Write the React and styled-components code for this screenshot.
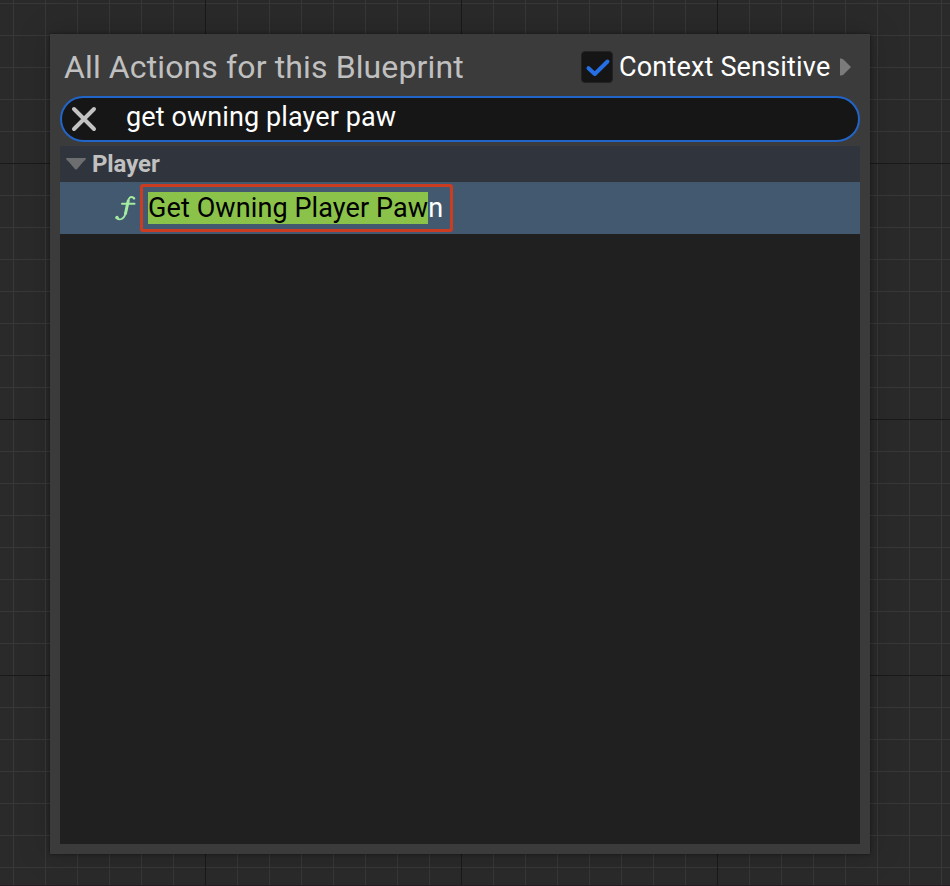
import React from 'react';
import styled, { createGlobalStyle } from 'styled-components';

const GlobalStyle = createGlobalStyle`
  * { box-sizing: border-box; }
  body { margin: 0; background: #292929; font-family: Roboto, sans-serif; }
`;

const Graph = styled.main`
  width: 950px;
  height: 886px;
  padding: 34px 0 0 50px;
  overflow: hidden;
  border-bottom: 1px solid #251b20;
  background-color: #2a2a2a;
  background-image:
    linear-gradient(to right, #191919 1px, transparent 1px),
    linear-gradient(to bottom, #191919 1px, transparent 1px),
    linear-gradient(to right, #383838 1px, transparent 1px),
    linear-gradient(to bottom, #383838 1px, transparent 1px);
  background-size: 256px 256px, 256px 256px, 32px 32px, 32px 32px;
  background-position: 205px 0, 0 163px, 13px 0, 0 3px;
`;

const Menu = styled.section`
  display: flex;
  flex-direction: column;
  width: 820px;
  height: 820px;
  padding: 0 10px 10px;
  background: #3b3b3b;
  box-shadow: 0 0 3px rgba(0, 0, 0, 0.5), 0 0 32px rgba(0, 0, 0, 0.18);
`;

const Header = styled.header`
  display: flex;
  align-items: center;
  height: 62px;
  padding: 3px 9px 0 4px;
`;

const Title = styled.h1`
  flex: 1;
  margin: 0;
  color: #c0c0c0;
  font-size: 32px;
  font-weight: 400;
  letter-spacing: 0.12px;
  line-height: 40px;
  white-space: nowrap;
`;

const Option = styled.label`
  display: flex;
  align-items: center;
  color: #fff;
  font-size: 27px;
  letter-spacing: 0.18px;
  line-height: 32px;
  white-space: nowrap;
`;

const CheckBox = styled.span`
  display: flex;
  width: 32px;
  height: 32px;
  margin-right: 6px;
  border: 1px solid #222;
  border-radius: 4px;
  background: #151515;
`;

const OptionText = styled.span`
  width: 221px;
`;

const Search = styled.div`
  display: flex;
  align-items: center;
  height: 46px;
  padding-left: 8px;
  border: 2px solid #2265c8;
  border-radius: 23px;
  background: #161616;
`;

const Query = styled.span`
  margin: -5px 0 0 28px;
  color: #fff;
  font-size: 27px;
  letter-spacing: 0.1px;
  line-height: 32px;
  white-space: nowrap;
`;

const Results = styled.div`
  flex: 1;
  margin-top: 4px;
  background: #202020;
`;

const Category = styled.div`
  display: flex;
  align-items: center;
  height: 36px;
  padding-left: 6px;
  background: #30343d;
  color: #c0c0c0;
  font-size: 24px;
  font-weight: 700;
  letter-spacing: -0.1px;
`;

const CategoryText = styled.span`
  margin-left: 6px;
`;

const Action = styled.div`
  display: flex;
  align-items: center;
  height: 52px;
  padding-left: 54px;
  background: #43596f;
`;

const Callout = styled.div`
  display: flex;
  align-items: center;
  width: 313px;
  height: 48px;
  margin-left: 3px;
  padding-left: 5px;
  border: 3px solid #cc3c20;
  border-radius: 3px;
  color: #fff;
  font-size: 27px;
  letter-spacing: 0.1px;
  line-height: 32px;
  white-space: nowrap;
`;

const Match = styled.mark`
  background: #8bc34a;
  color: #000;
`;

export default function App() {
  return (
    <>
      <GlobalStyle />
      <Graph>
        <Menu>
          <Header>
            <Title>All Actions for this Blueprint</Title>
            <Option>
              <CheckBox>
                <svg width="30" height="30" viewBox="0 0 30 30" fill="none" stroke="#256ee4" strokeWidth="4" strokeLinecap="round" strokeLinejoin="round">
                  <path d="M6.5 16.2 12.8 22 25.5 9.5" />
                </svg>
              </CheckBox>
              <OptionText>Context Sensitive</OptionText>
              <svg width="11" height="18" viewBox="0 0 11 18">
                <path d="M0 0.5Q3 0 5 3L11 9 5 15Q3 18 0 17.5Z" fill="#7b7b7b" />
              </svg>
            </Option>
          </Header>
          <Search>
            <svg width="28" height="28" viewBox="0 0 28 28" fill="none" stroke="#c3c3c3" strokeWidth="4" strokeLinecap="round">
              <path d="M4 4 24 24M24 4 4 24" />
            </svg>
            <Query>get owning player paw</Query>
          </Search>
          <Results>
            <Category>
              <svg width="20" height="14" viewBox="0 0 20 14">
                <path d="M0 1H20Q20 3 17 5L12 11Q10 14 8 11L3 5Q0 3 0 1Z" fill="#6d6e70" />
              </svg>
              <CategoryText>Player</CategoryText>
            </Category>
            <Action>
              <svg width="23" height="28" viewBox="0 0 23 28" fill="none" stroke="#a3eda0" strokeLinecap="round">
                <path d="M20 4C16.5 1.5 14.6 4 13.9 8L11.6 19C10.6 24.5 6 27 2.5 24" strokeWidth="1.8" />
                <path d="M14.2 7 11.5 19.5" strokeWidth="3" />
                <path d="M8 9.8H20.5" strokeWidth="2" />
                <circle cx="20" cy="4.4" r="1.2" fill="#a3eda0" stroke="none" />
                <circle cx="3" cy="23.5" r="1.7" fill="#a3eda0" stroke="none" />
              </svg>
              <Callout><Match>Get Owning Player Paw</Match>n</Callout>
            </Action>
          </Results>
        </Menu>
      </Graph>
    </>
  );
}
